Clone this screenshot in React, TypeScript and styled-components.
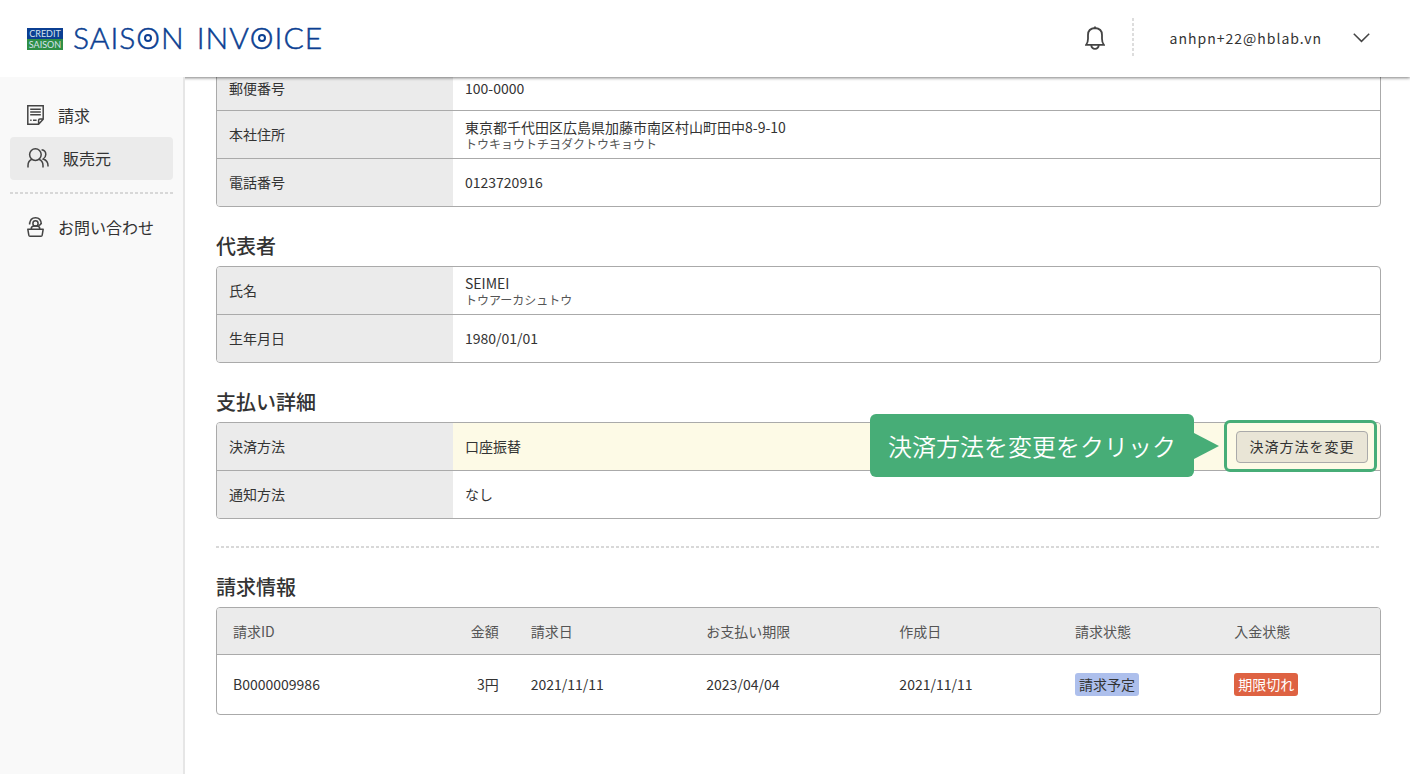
import React from 'react';
import styled, { createGlobalStyle, css } from 'styled-components';

const GlobalStyle = createGlobalStyle`
  *, *::before, *::after { box-sizing: border-box; }
  html, body, #root { height: 100%; }
  body {
    margin: 0;
    background: #fff;
    color: #333;
    font-family: 'Noto Sans CJK JP', sans-serif;
    font-size: 14px;
    line-height: 20px;
  }
  button { font: inherit; color: inherit; }
`;

const Page = styled.div`
  display: flex;
  flex-direction: column;
  height: 100%;
`;

const Header = styled.header`
  display: flex;
  align-items: center;
  justify-content: space-between;
  flex: none;
  height: 77px;
  padding: 0 40px 0 27px;
  background: #fff;
  position: relative;
  z-index: 1;
  box-shadow: 0 1px 3px rgba(0, 0, 0, 0.5);
`;

const Brand = styled.a`
  display: flex;
  align-items: center;
  gap: 10px;
  color: #0b3f92;
  text-decoration: none;
`;

const Badge = styled.span`
  display: flex;
  flex-direction: column;
  width: 36px;
  font-family: Lato, sans-serif;
  font-size: 9px;
  line-height: 11px;
  text-align: center;
  color: #d5e2ee;
`;

const BadgeLine = styled.span<{ $color: string }>`
  height: 11px;
  background: ${(p) => p.$color};
`;

const Wordmark = styled.span`
  display: flex;
  gap: 12px;
  padding-bottom: 3px;
  font-family: Lato, sans-serif;
  font-size: 30px;
  font-weight: 300;
  line-height: 32px;
  letter-spacing: 1px;
  white-space: nowrap;
  -webkit-text-stroke: 0.5px currentColor;
`;

const RingO = styled.span`
  display: inline-block;
  position: relative;
  &::after {
    content: '';
    position: absolute;
    left: 8px;
    top: 13px;
    width: 8px;
    height: 8px;
    border: 2px solid currentColor;
    border-radius: 50%;
  }
`;

const Account = styled.div`
  display: flex;
  align-items: center;
  padding-bottom: 2px;
`;

const PlainButton = styled.button`
  display: flex;
  align-items: center;
  gap: 31px;
  padding: 0;
  border: 0;
  background: none;
  letter-spacing: 1px;
`;

const VerticalRule = styled.span`
  width: 2px;
  height: 40px;
  margin: 0 36px 0 27px;
  background: repeating-linear-gradient(#ddd 0 3px, transparent 3px 5px);
`;

const Body = styled.div`
  display: flex;
  flex: 1;
  min-height: 0;
`;

const Sidebar = styled.nav`
  position: relative;
  z-index: 2;
  flex: none;
  width: 185px;
  padding: 17px 10px;
  background: #f9f9f9;
  border-right: 2px solid #e6e6e6;
`;

const NavItem = styled.a<{ $active?: boolean }>`
  display: flex;
  align-items: center;
  gap: 14px;
  height: 43px;
  padding: 0 0 2px 17px;
  border-radius: 4px;
  font-size: 16px;
  color: inherit;
  text-decoration: none;
  ${(p) => p.$active && css`background: #ebebeb;`}
`;

const Divider = styled.hr<{ $before: number; $after: number }>`
  height: 2px;
  margin: ${(p) => p.$before}px 0 ${(p) => p.$after}px;
  border: 0;
  background: repeating-linear-gradient(90deg, #d8d8d8 0 3px, transparent 3px 5px);
`;

const Main = styled.main`
  flex: 1;
  min-width: 0;
  overflow: hidden;
  padding: 0 29px 0 31px;
`;

const Scrolled = styled.div`
  margin-top: -12px;
`;

const Title = styled.h2`
  margin: 23px 0 5px;
  font-size: 20px;
  line-height: 31px;
  font-weight: 500;
  ${Divider} + & { margin-top: 0; }
`;

const Table = styled.table`
  width: 100%;
  table-layout: fixed;
  border: 1px solid #aaa;
  border-radius: 4px;
  border-spacing: 0;
  tr + tr > *, tbody.rows tr > * { border-top: 1px solid #aaa; }
  > :first-child > tr:first-child > :first-child { border-top-left-radius: 3px; }
  > :first-child > tr:first-child > :last-child { border-top-right-radius: 3px; }
  > :last-child > tr:last-child > :first-child { border-bottom-left-radius: 3px; }
`;

const Row = styled.tr<{ $highlight?: boolean; $height?: number }>`
  height: ${(p) => p.$height ?? 48}px;
  ${(p) => p.$highlight && css`td { background: #fdfae6; }`}
`;

const Label = styled.th`
  width: 236px;
  padding: 0 12px;
  background: #ebebeb;
  font-weight: 400;
  line-height: 17px;
  text-align: left;
`;

const Value = styled.td`
  padding: 0 12px;
  line-height: 17px;
`;

const Kana = styled.div`
  font-size: 12px;
  line-height: 15px;
  color: #555;
`;

const MethodRow = styled.div`
  display: flex;
  align-items: center;
  justify-content: space-between;
`;

const ChangeArea = styled.div`
  position: relative;
`;

const ChangeButton = styled.button`
  display: block;
  width: 132px;
  height: 32px;
  padding: 0;
  border: 1px solid #aaa;
  border-radius: 4px;
  background: #e9e5d6;
  letter-spacing: 1px;
`;

const Highlight = styled.div`
  position: absolute;
  inset: -11px -9px -9px -12px;
  border: 3px solid #47ad77;
  border-radius: 6px;
  pointer-events: none;
`;

const PaymentSection = styled.section`
  position: relative;
`;

const Callout = styled.div`
  position: absolute;
  right: 187px;
  top: 28px;
  display: flex;
  align-items: center;
  height: 63px;
  padding: 0 18px;
  border-radius: 6px;
  background: #47ad77;
  color: #fff;
  font-size: 24px;
  font-weight: 350;
  white-space: nowrap;
  &::after {
    content: '';
    position: absolute;
    left: 100%;
    top: 19px;
    border: solid transparent;
    border-width: 13px 0 13px 25px;
    border-left-color: #47ad77;
  }
`;

const HeadCell = styled.th<{ $width?: string; $right?: boolean }>`
  width: ${(p) => p.$width ?? 'auto'};
  padding: 0 16px;
  background: #ebebeb;
  color: #555;
  font-weight: 400;
  line-height: 17px;
  text-align: ${(p) => (p.$right ? 'right' : 'left')};
`;

const Cell = styled.td<{ $right?: boolean }>`
  padding: 0 16px;
  line-height: 17px;
  text-align: ${(p) => (p.$right ? 'right' : 'left')};
`;

const Tag = styled.span<{ $tone: 'blue' | 'red' }>`
  display: inline-block;
  padding: 1px 4px;
  border-radius: 3px;
  line-height: 21px;
  background: ${(p) => (p.$tone === 'blue' ? '#adbfec' : '#de6242')};
  color: ${(p) => (p.$tone === 'blue' ? '#333' : '#fff')};
`;

const Icon = styled.svg`
  flex: none;
  fill: none;
  stroke: #444;
  stroke-width: 1.5;
`;

const InvoiceIcon = () => (
  <Icon width="17" height="20" viewBox="0 0 17 20" aria-hidden="true">
    <path d="M.8.8h15.4v13.4l-4.6 5H.8zM16 14h-3.2q-1.2 0-1.2 1.2V19" />
    <path d="M3.2 4.2h10.6M3.2 7h10.6M3.2 9.8h10.6M3.2 15.2h1.4M6 15.2h3.6" />
  </Icon>
);

const SellersIcon = () => (
  <Icon width="22" height="20" viewBox="0 0 22 20" aria-hidden="true">
    <circle cx="8.4" cy="6.6" r="5.8" />
    <path d="M1 19.6v-2.2q0-5 4.2-6.2M11.6 11.2q4.4 1.2 4.4 6.2v2.2M14.6 1.8q4.200.6 4.200 4.600 0 2.600-2.600 4.600 4.800 1.600 4.800 6.600v.8" />
  </Icon>
);

const ContactIcon = () => (
  <Icon width="17" height="20" viewBox="0 0 17 20" strokeLinejoin="round" aria-hidden="true">
    <path d="M.8 12.2h15.4l-1 6q-.2 1-1.2 1H3q-1 0-1.2-1zM4.2 12q0-3 3-3h2.600q3 0 3 3" />
    <circle cx="8.5" cy="6.4" r="2.6" />
    <path d="M2.6 7.4Q3 .8 8.5.8t5.900 6.600M14 6.600q-.6 1.800-2.600 2M2.600 5.600v2" />
  </Icon>
);

const BellIcon = () => (
  <Icon width="20" height="24" viewBox="0 0 20 24" aria-hidden="true">
    <g strokeWidth="1.8">
      <path d="M1.2 18.8Q3 16.6 3 12.8V9q0-6.600 7-7 7 .4 7 7v3.800q0 3.800 1.800 6zM10 2V.4M6.200 19.200q.4 3.600 3.800 3.600t3.800-3.600" />
    </g>
  </Icon>
);

const ChevronIcon = () => (
  <Icon width="17" height="10" viewBox="0 0 17 10" aria-hidden="true">
    <path d="M.8.8l7.700 7.600L16.200.8" />
  </Icon>
);

const invoices = [
  { id: 'B0000009986', amount: '3円', billed: '2021/11/11', due: '2023/04/04', created: '2021/11/11', state: '請求予定', payment: '期限切れ' },
];

export default function App() {
  return (
    <Page>
      <GlobalStyle />
      <Header>
        <Brand href="#">
          <Badge>
            <BadgeLine $color="#0b3f92">CREDIT</BadgeLine>
            <BadgeLine $color="#2f8f46">SAISON</BadgeLine>
          </Badge>
          <Wordmark>
            <span>SAIS<RingO>O</RingO>N</span>
            <span>INV<RingO>O</RingO>ICE</span>
          </Wordmark>
        </Brand>
        <Account>
          <PlainButton type="button" aria-label="通知"><BellIcon /></PlainButton>
          <VerticalRule />
          <PlainButton type="button">
            anhpn+22@hblab.vn
            <ChevronIcon />
          </PlainButton>
        </Account>
      </Header>
      <Body>
        <Sidebar>
          <NavItem href="#"><InvoiceIcon />請求</NavItem>
          <NavItem href="#" $active><SellersIcon />販売元</NavItem>
          <Divider $before={12} $after={12} />
          <NavItem href="#"><ContactIcon />お問い合わせ</NavItem>
        </Sidebar>
        <Main>
          <Scrolled>
            <Table>
              <tbody>
                <Row $height={44}>
                  <Label scope="row">郵便番号</Label>
                  <Value>100-0000</Value>
                </Row>
                <Row>
                  <Label scope="row">本社住所</Label>
                  <Value>東京都千代田区広島県加藤市南区村山町田中8-9-10<Kana>トウキョウトチヨダクトウキョウト</Kana></Value>
                </Row>
                <Row>
                  <Label scope="row">電話番号</Label>
                  <Value>0123720916</Value>
                </Row>
              </tbody>
            </Table>

            <Title>代表者</Title>
            <Table>
              <tbody>
                <Row $height={47}>
                  <Label scope="row">氏名</Label>
                  <Value>SEIMEI<Kana>トウアーカシュトウ</Kana></Value>
                </Row>
                <Row>
                  <Label scope="row">生年月日</Label>
                  <Value>1980/01/01</Value>
                </Row>
              </tbody>
            </Table>

            <PaymentSection>
              <Title>支払い詳細</Title>
              <Table>
                <tbody>
                  <Row $highlight $height={47}>
                    <Label scope="row">決済方法</Label>
                    <Value>
                      <MethodRow>
                        口座振替
                        <ChangeArea>
                          <ChangeButton type="button">決済方法を変更</ChangeButton>
                          <Highlight />
                        </ChangeArea>
                      </MethodRow>
                    </Value>
                  </Row>
                  <Row>
                    <Label scope="row">通知方法</Label>
                    <Value>なし</Value>
                  </Row>
                </tbody>
              </Table>
              <Callout>決済方法を変更をクリック</Callout>
            </PaymentSection>

            <Divider $before={27} $after={23} />

            <Title>請求情報</Title>
            <Table>
              <thead>
                <Row $height={46}>
                  <HeadCell $width="18%">請求ID</HeadCell>
                  <HeadCell $width="7.6%" $right>金額</HeadCell>
                  <HeadCell $width="15.1%">請求日</HeadCell>
                  <HeadCell $width="16.6%">お支払い期限</HeadCell>
                  <HeadCell $width="15.1%">作成日</HeadCell>
                  <HeadCell $width="13.7%">請求状態</HeadCell>
                  <HeadCell>入金状態</HeadCell>
                </Row>
              </thead>
              <tbody className="rows">
                {invoices.map((i) => (
                  <Row key={i.id} $height={60}>
                    <Cell>{i.id}</Cell>
                    <Cell $right>{i.amount}</Cell>
                    <Cell>{i.billed}</Cell>
                    <Cell>{i.due}</Cell>
                    <Cell>{i.created}</Cell>
                    <Cell><Tag $tone="blue">{i.state}</Tag></Cell>
                    <Cell><Tag $tone="red">{i.payment}</Tag></Cell>
                  </Row>
                ))}
              </tbody>
            </Table>
          </Scrolled>
        </Main>
      </Body>
    </Page>
  );
}
